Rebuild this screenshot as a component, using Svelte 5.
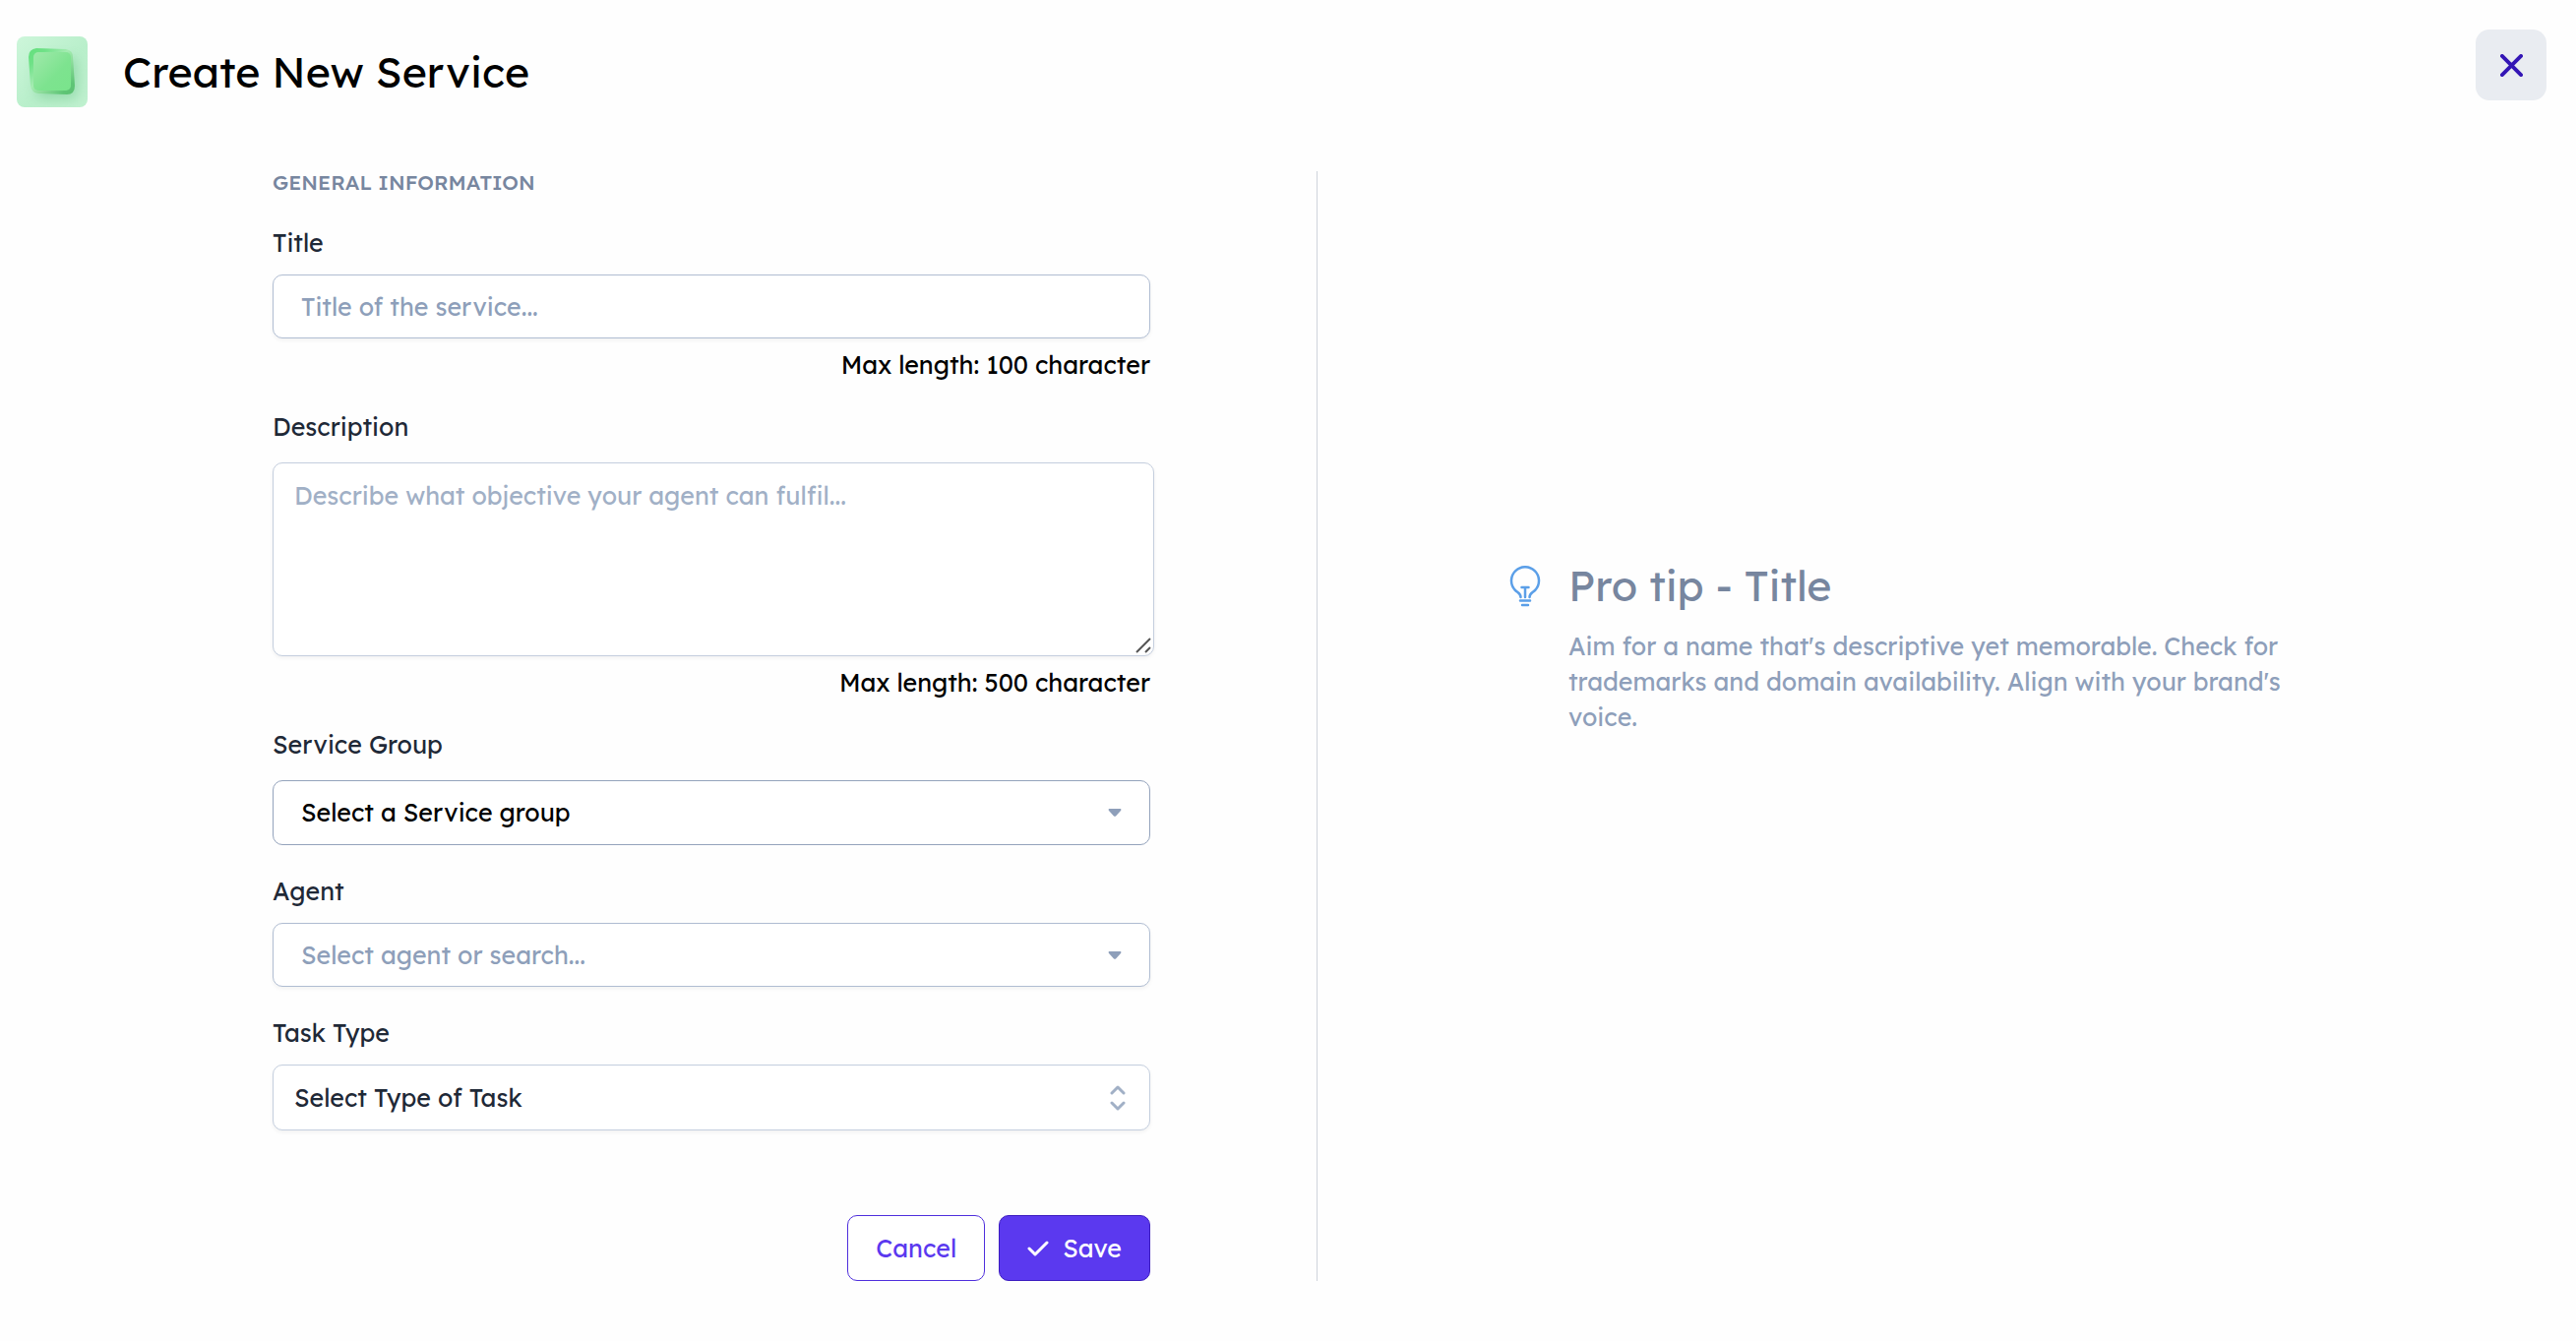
<script>
  let title = $state('');
  let description = $state('');
  let group = $state('');
  let agent = $state('');
  let taskType = $state('');
</script>

<div class="page">
  <header class="header">
    <div class="brand">
      <svg class="logo" viewBox="0 0 72 72" aria-hidden="true">
        <defs>
          <linearGradient id="tile" x1="0" y1="0" x2="1" y2="1">
            <stop offset="0" stop-color="#cdf6da" />
            <stop offset="0.55" stop-color="#b9efcb" />
            <stop offset="1" stop-color="#c0f1d0" />
          </linearGradient>
          <linearGradient id="rim" x1="0" y1="0" x2="1" y2="1">
            <stop offset="0" stop-color="#62e07c" />
            <stop offset="0.2" stop-color="#6fe187" />
            <stop offset="0.45" stop-color="#a5ecb2" />
            <stop offset="0.6" stop-color="#8edd9c" />
            <stop offset="0.85" stop-color="#5fc576" />
            <stop offset="1" stop-color="#5abf70" />
          </linearGradient>
          <linearGradient id="face" x1="0" y1="0" x2="1" y2="1">
            <stop offset="0" stop-color="#a0e9ab" />
            <stop offset="0.6" stop-color="#7de38f" />
            <stop offset="1" stop-color="#7ae48c" />
          </linearGradient>
          <filter id="soft" x="-50%" y="-50%" width="200%" height="200%">
            <feGaussianBlur stdDeviation="6" />
          </filter>
          <clipPath id="tileClip"><rect width="72" height="72" rx="8" /></clipPath>
        </defs>
        <rect width="72" height="72" rx="8" fill="url(#tile)" />
        <g clip-path="url(#tileClip)">
          <rect x="20" y="22" width="42" height="42" rx="8" fill="#7fcf99" opacity="0.6" filter="url(#soft)" />
        </g>
        <path d="M20 12 L50 13 Q57 14 57 21 L59 50 Q59 59 51 59 L22 58 Q15 57 14 50 L12 21 Q12 13 20 12 Z" fill="url(#rim)" />
        <rect x="17" y="16" width="38" height="39" rx="5" fill="url(#face)" />
      </svg>
      <h1>Create New Service</h1>
    </div>
    <button class="close" type="button" aria-label="Close">
      <svg viewBox="0 0 24 24" aria-hidden="true"><path d="M2 2 22 22M22 2 2 22" /></svg>
    </button>
  </header>

  <main class="content">
    <form class="form" onsubmit={(e) => e.preventDefault()}>
      <h2>General information</h2>

      <div class="field">
        <label for="title">Title</label>
        <input id="title" class="control" type="text" maxlength="100" placeholder="Title of the service..." bind:value={title} />
        <p class="hint">Max length: 100 character</p>
      </div>

      <div class="field roomy">
        <label for="description">Description</label>
        <div class="area">
          <textarea id="description" class="control" maxlength="500" placeholder="Describe what objective your agent can fulfil..." bind:value={description}></textarea>
          <svg class="grip" viewBox="0 0 16 16" aria-hidden="true"><path d="M1 15 15 1M10 15 15 10" /></svg>
        </div>
        <p class="hint">Max length: 500 character</p>
      </div>

      <div class="field roomy">
        <label for="group">Service Group</label>
        <div class="picker">
          <select id="group" class="control strong" bind:value={group}>
            <option value="">Select a Service group</option>
          </select>
          <svg class="caret" viewBox="0 0 14 8" aria-hidden="true"><path d="M1 0H13Q14 1 13 2L8 7.500Q7 8 6 7.500L1 2Q0 1 1 0Z" /></svg>
        </div>
      </div>

      <div class="field">
        <label for="agent">Agent</label>
        <div class="picker">
          <input id="agent" class="control" type="text" placeholder="Select agent or search..." bind:value={agent} />
          <svg class="caret" viewBox="0 0 14 8" aria-hidden="true"><path d="M1 0H13Q14 1 13 2L8 7.500Q7 8 6 7.500L1 2Q0 1 1 0Z" /></svg>
        </div>
      </div>

      <div class="field">
        <label for="task">Task Type</label>
        <div class="picker">
          <select id="task" class="control light" bind:value={taskType}>
            <option value="">Select Type of Task</option>
          </select>
          <svg class="updown" viewBox="0 0 16 28" aria-hidden="true"><path d="M2 9 8 3 14 9M2 19 8 25 14 19" /></svg>
        </div>
      </div>

      <div class="actions">
        <button class="btn" type="button">Cancel</button>
        <button class="btn primary" type="submit">
          <svg viewBox="0 0 22 16" aria-hidden="true"><path d="M2 8 8 14 20 2" /></svg>
          Save
        </button>
      </div>
    </form>

    <aside class="tip">
      <svg class="bulb" viewBox="0 0 32 42" aria-hidden="true">
        <path d="M11.500 32C11.500 28 9 28 5.500 24.500A14 14 0 1 1 26.500 24.500C23 28 20.500 28 20.500 32" />
        <path d="M12.500 22H19.500M16 22V32M11 35.500H21M13 40H19" />
      </svg>
      <div>
        <h2>Pro tip - Title</h2>
        <p>Aim for a name that's descriptive yet memorable. Check for trademarks and domain availability. Align with your brand's voice.</p>
      </div>
    </aside>
  </main>
</div>

<style>
  :global(body) {
    margin: 0;
    background: #fefefe;
  }

  .page,
  .page :is(button, input, select, textarea) {
    font-family: Lexend, Inter, 'Liberation Sans', sans-serif;
    font-size: 25px;
    font-weight: 400;
    line-height: 32px;
  }

  .page * {
    box-sizing: border-box;
  }

  h1,
  h2,
  p {
    margin: 0;
    font-weight: 400;
  }

  .header {
    display: flex;
    justify-content: space-between;
    align-items: flex-start;
    padding: 30px 30px 0 17px;
  }

  .brand {
    display: flex;
    align-items: center;
    gap: 36px;
    padding-top: 7px;
  }

  .logo {
    width: 72px;
    height: 72px;
  }

  h1 {
    color: #000;
    font-size: 43px;
    line-height: 56px;
  }

  .close {
    display: grid;
    place-items: center;
    width: 72px;
    height: 72px;
    padding: 0;
    border: 0;
    border-radius: 14px;
    background: #e9ecf1;
  }

  .close svg {
    width: 23px;
    height: 23px;
    fill: none;
    stroke: #3315b5;
    stroke-width: 4;
    stroke-linecap: round;
  }

  .content {
    display: grid;
    grid-template-columns: 1339fr 1279fr;
    padding-top: 65px;
  }

  .form {
    display: flex;
    flex-direction: column;
    padding: 0 169px 0 277px;
    border-right: 1px solid #cfd4dc;
  }

  .form h2 {
    margin-bottom: 34px;
    color: #77869f;
    font-size: 21px;
    font-weight: 500;
    line-height: 23px;
    text-transform: uppercase;
  }

  .field {
    display: flex;
    flex-direction: column;
    gap: 16px;
    margin-bottom: 31px;
  }

  .field.roomy {
    gap: 20px;
  }

  label {
    color: #1f2937;
  }

  .control {
    display: block;
    width: 100%;
    height: 65px;
    margin: 0;
    padding: 0 28px;
    border: 1px solid #b0bdd2;
    border-radius: 10px;
    outline: none;
    background: #fff;
    color: #1f2937;
    box-shadow: 0 2px 4px rgb(0 0 0 / 5%);
    appearance: none;
  }

  select.control {
    height: 66px;
  }

  .control::placeholder {
    color: #8e9fba;
    opacity: 1;
  }

  .control.strong {
    border-color: #94a3bc;
    color: #000;
    box-shadow: none;
  }

  .control.light {
    height: 67px;
    padding: 0 21px;
    border-color: #c4cede;
  }

  .area {
    position: relative;
    margin-right: -4px;
  }

  textarea.control {
    height: 197px;
    padding: 17px 21px;
    border-color: #c4cede;
    resize: vertical;
  }

  textarea.control::placeholder {
    color: #a1b0c6;
  }

  textarea.control::-webkit-resizer {
    display: none;
  }

  .grip {
    position: absolute;
    right: 3px;
    bottom: 3px;
    width: 16px;
    height: 16px;
    fill: none;
    stroke: #555;
    stroke-width: 2;
    pointer-events: none;
  }

  .hint {
    margin-top: -5px;
    color: #000;
    text-align: right;
  }

  .roomy .hint {
    margin-top: -9px;
  }

  .picker {
    position: relative;
  }

  .caret,
  .updown {
    position: absolute;
    top: 50%;
    translate: 0 -50%;
    pointer-events: none;
  }

  .caret {
    right: 29px;
    width: 14px;
    height: 8px;
    fill: #8e9fba;
  }

  .updown {
    right: 25px;
    width: 16px;
    height: 28px;
    fill: none;
    stroke: #a1b0c6;
    stroke-width: 3;
    stroke-linecap: round;
    stroke-linejoin: round;
  }

  .actions {
    display: flex;
    justify-content: flex-end;
    gap: 14px;
    margin-top: 55px;
  }

  .btn {
    display: flex;
    align-items: center;
    gap: 14px;
    height: 67px;
    padding: 0 28px;
    border: 1px solid #4f2fdc;
    border-radius: 10px;
    background: #fff;
    color: #5b39ef;
  }

  .btn.primary {
    border-color: #3c1cc0;
    background: #5b39ef;
    color: #fff;
  }

  .btn svg {
    width: 22px;
    height: 16px;
    fill: none;
    stroke: #fff;
    stroke-width: 3;
    stroke-linecap: round;
    stroke-linejoin: round;
  }

  .tip {
    display: flex;
    align-items: flex-start;
    gap: 28px;
    padding: 393px 260px 0 195px;
  }

  .bulb {
    flex: none;
    width: 32px;
    height: 42px;
    margin-top: 8px;
    fill: none;
    stroke: #5b9fe8;
    stroke-width: 2.5;
    stroke-linecap: round;
    stroke-linejoin: round;
  }

  .tip h2 {
    color: #77869f;
    font-size: 43px;
    line-height: 56px;
  }

  .tip p {
    margin-top: 16px;
    color: #8e9fba;
    line-height: 36px;
  }
</style>
